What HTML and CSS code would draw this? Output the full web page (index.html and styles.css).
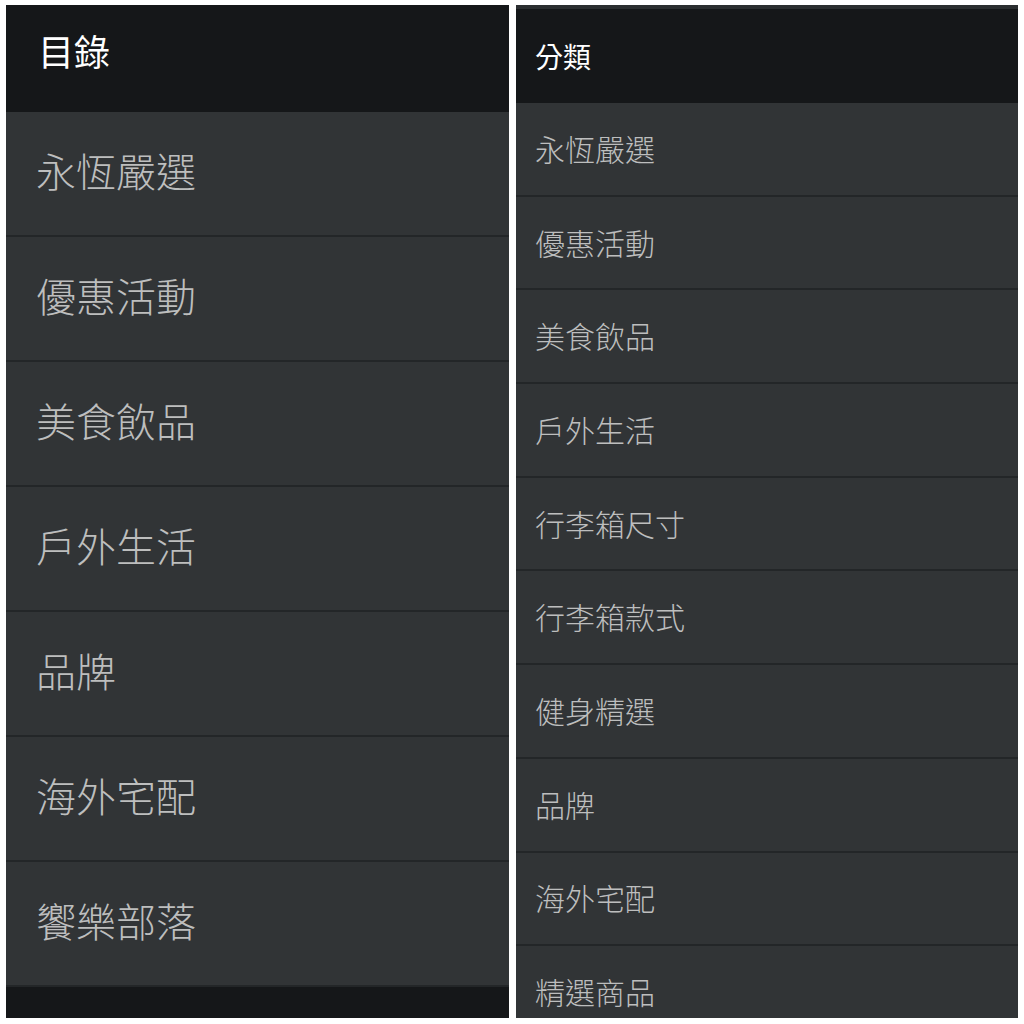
FILE: index.html
```html
<!DOCTYPE html>
<html lang="zh-Hant">
<head>
  <meta charset="UTF-8" />
  <title>目錄 / 分類</title>
  <link rel="stylesheet" href="styles.css">
</head>
<body>
  <div class="screens">
    <div class="panel panel-big">
      <div class="panel-head">目錄</div>
      <ul class="menu">
        <li>永恆嚴選</li>
        <li>優惠活動</li>
        <li>美食飲品</li>
        <li>戶外生活</li>
        <li>品牌</li>
        <li>海外宅配</li>
        <li>饗樂部落</li>
      </ul>
      <div class="panel-foot"></div>
    </div>

    <div class="panel panel-small">
      <div class="status-strip"></div>
      <div class="panel-head">分類</div>
      <ul class="menu">
        <li>永恆嚴選</li>
        <li>優惠活動</li>
        <li>美食飲品</li>
        <li>戶外生活</li>
        <li>行李箱尺寸</li>
        <li>行李箱款式</li>
        <li>健身精選</li>
        <li>品牌</li>
        <li>海外宅配</li>
        <li>精選商品</li>
      </ul>
    </div>
  </div>
</body>
</html>
```

FILE: styles.css
```css
html, body {
  margin: 0;
  padding: 0;
  background: #ffffff;
  font-family: "Noto Sans CJK TC", "Noto Sans", sans-serif;
}

.screens {
  display: flex;
  gap: 7px;
  padding: 5px 6px 6px 6px;
  height: 1013px;
}

.panel {
  display: flex;
  flex-direction: column;
  background: #313436;
  overflow: hidden;
}

.panel-big {
  width: 503px;
}

.panel-small {
  width: 502px;
}

.panel-head {
  background: #151719;
  color: #ffffff;
  display: flex;
  align-items: center;
  box-sizing: border-box;
  flex-shrink: 0;
}

.panel-big .panel-head {
  height: 107px;
  padding: 0 0 18px 32px;
  font-size: 36px;
}

.panel-small .panel-head {
  height: 94px;
  padding: 0 0 0 19px;
  font-size: 28px;
}

.status-strip {
  height: 4px;
  background: #2b2e30;
  flex-shrink: 0;
}

.menu {
  list-style: none;
  margin: 0;
  padding: 0;
}

.menu li {
  display: flex;
  align-items: center;
  box-sizing: border-box;
  color: #bdbebe;
  font-weight: 300;
  border-bottom: 2px solid #232628;
}

.panel-big .menu li {
  height: 125px;
  padding: 0 0 8px 30px;
  font-size: 40px;
}

.panel-small .menu li {
  height: 93.7px;
  padding: 0 0 2px 19px;
  font-size: 30px;
}

.panel-foot {
  flex: 1;
  background: #151719;
}
```
